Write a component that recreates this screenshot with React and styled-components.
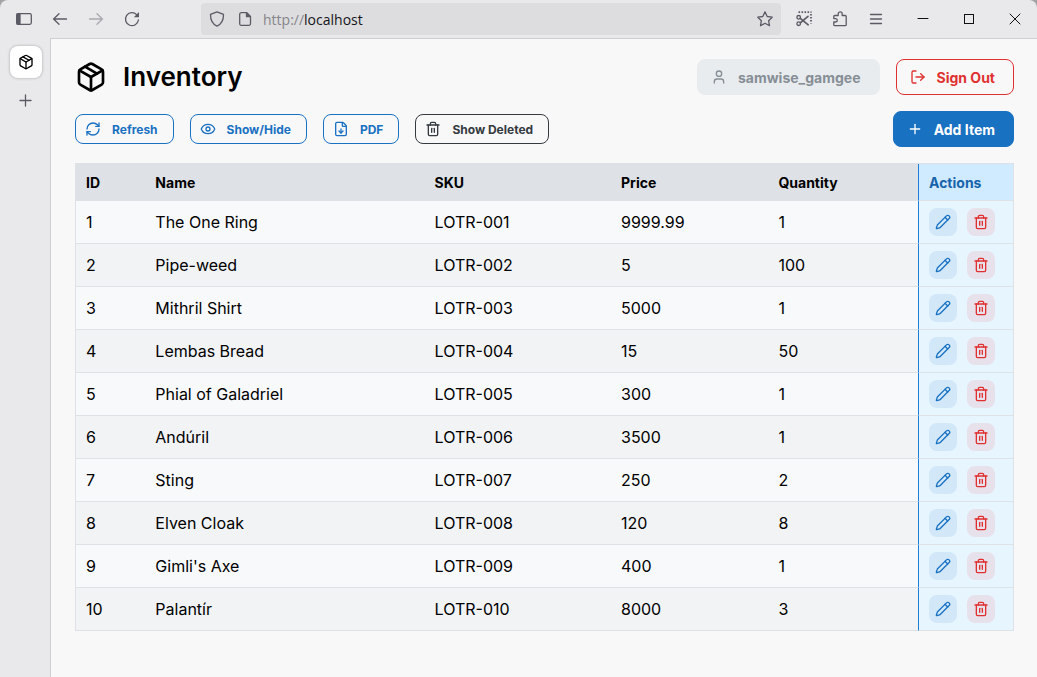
import React from "react";
import styled, { createGlobalStyle } from "styled-components";
import {
  Package, RefreshCw, Eye, FileDown, Trash2, User, LogOut, Plus, Pencil,
} from "lucide-react";

const GlobalStyle = createGlobalStyle`
  *, *::before, *::after { box-sizing: border-box; }
  body {
    margin: 0;
    background: #a3a3a6;
    color: #000;
    font-family: Inter, "Liberation Sans", sans-serif;
  }
  button, input { font-family: inherit; margin: 0; }
`;

const BrowserWindow = styled.div`
  display: flex;
  flex-direction: column;
  min-height: 100vh;
  background: #e9e9eb;
  border-radius: 8px 8px 0 0;
`;

const Toolbar = styled.header`
  display: flex;
  align-items: center;
  height: 38px;
  padding: 0 14px;
`;

const ToolGroup = styled.div`
  display: flex;
  align-items: center;
  gap: ${(p) => p.$gap}px;
`;

const ToolButton = styled.button`
  display: flex;
  flex: none;
  padding: 0;
  border: 0;
  background: none;
  color: ${(p) => p.$color || "#5b5b66"};
  opacity: ${(p) => (p.disabled ? 0.45 : 1)};
`;

const AddressBar = styled.div`
  display: flex;
  flex: 1;
  align-items: center;
  gap: 12px;
  height: 32px;
  margin: 0 15px 0 59px;
  padding: 0 8px;
  border-radius: 4px;
  background: #dddddf;
`;

const Address = styled.a`
  flex: 1;
  margin-left: -2px;
  color: #15141a;
  font: 14px "Open Sans", sans-serif;
  text-decoration: none;
`;

const Scheme = styled.span`
  color: #85858a;
`;

const WindowControls = styled.div`
  display: flex;
  gap: 30px;
  margin-left: 31px;
`;

const Body = styled.div`
  display: flex;
  flex: 1;
`;

const TabRail = styled.nav`
  display: flex;
  flex: none;
  flex-direction: column;
  align-items: center;
  gap: 15px;
  width: 50px;
  padding: 8px 0 0 2px;
`;

const Tab = styled.button`
  display: flex;
  align-items: center;
  justify-content: center;
  width: 32px;
  height: 32px;
  padding: 0;
  border: 0;
  border-radius: 8px;
  background: #fff;
  box-shadow: 0 0 3px rgba(0, 0, 0, 0.3);
`;

const Page = styled.main`
  flex: 1;
  min-width: 0;
  padding: 20px 23px 24px 24px;
  border: solid #cfcfd2;
  border-width: 1px 0 0 1px;
  background: #f8f8f8;
`;

const Bar = styled.div`
  display: flex;
  align-items: center;
  justify-content: space-between;
  height: 36px;
  margin-bottom: 16px;
`;

const Group = styled.div`
  display: flex;
  align-items: center;
  gap: 16px;
`;

const Title = styled.h1`
  margin: 0;
  font-size: 26px;
  font-weight: 600;
  line-height: 38px;
`;

const tones = {
  blue: ["#1971c2", "transparent", "#1971c2"],
  dark: ["#343a40", "transparent", "#343a40"],
  red: ["#e03131", "transparent", "#e03131"],
  filled: ["#fff", "#1971c2", "#1971c2"],
  muted: ["#868e96", "#e9ecef", "#e9ecef"],
};

const Button = styled.button`
  display: flex;
  align-items: center;
  gap: 11px;
  height: ${(p) => (p.$large ? 36 : 30)}px;
  padding: ${(p) => (p.$large ? "0 18px 0 13px" : "0 15px 0 9px")};
  border: 1px solid ${(p) => tones[p.$tone][2]};
  border-radius: 8px;
  background: ${(p) => tones[p.$tone][1]};
  color: ${(p) => tones[p.$tone][0]};
  font-size: ${(p) => (p.$large ? 14 : 12)}px;
  font-weight: 700;
  white-space: nowrap;
`;

const Table = styled.table`
  width: 100%;
  table-layout: fixed;
  border: solid #dee2e6;
  border-width: 1px 1px 0;
  border-spacing: 0;
`;

const Column = styled.col`
  width: ${(p) => p.$width};
`;

const HeadCell = styled.th`
  height: 37px;
  padding: 0 10px;
  border-bottom: 1px solid #dee2e6;
  background: #dee2e6;
  font-size: 14px;
  font-weight: 700;
  text-align: left;
`;

const ActionsHead = styled(HeadCell)`
  border-left: 1px solid #1c7ed6;
  background: #d0ebff;
  color: #1864ab;
`;

const Row = styled.tr`
  background: #f8f9fb;
  &:nth-child(even) { background: #f1f3f5; }
`;

const Cell = styled.td`
  height: 43px;
  padding: 0 10px;
  border-bottom: 1px solid #dee2e6;
  font-size: 16px;
`;

const ActionsCell = styled(Cell)`
  border-left: 1px solid #1c7ed6;
  background: #e7f5ff;
`;

const Actions = styled.div`
  display: flex;
  gap: 10px;
`;

const IconButton = styled.button`
  display: flex;
  align-items: center;
  justify-content: center;
  width: 28px;
  height: 28px;
  padding: 0;
  border: 0;
  border-radius: 8px;
  background: ${(p) => (p.$danger ? "#e7e1eb" : "#d2e8f9")};
  color: ${(p) => (p.$danger ? "#e03131" : "#1971c2")};
`;

function Glyph({ children, size = 16, width = 1.3 }) {
  return (
    <svg width={size} height={size} viewBox={`0 0 ${size} ${size}`} fill="none" stroke="currentColor"
      strokeWidth={width} strokeLinecap="round" strokeLinejoin="round" aria-hidden="true">
      {children}
    </svg>
  );
}

const items = [
  ["The One Ring", "LOTR-001", "9999.99", 1],
  ["Pipe-weed", "LOTR-002", "5", 100],
  ["Mithril Shirt", "LOTR-003", "5000", 1],
  ["Lembas Bread", "LOTR-004", "15", 50],
  ["Phial of Galadriel", "LOTR-005", "300", 1],
  ["Andúril", "LOTR-006", "3500", 1],
  ["Sting", "LOTR-007", "250", 2],
  ["Elven Cloak", "LOTR-008", "120", 8],
  ["Gimli's Axe", "LOTR-009", "400", 1],
  ["Palantír", "LOTR-010", "8000", 3],
];

function BrowserToolbar() {
  return (
    <Toolbar>
      <ToolGroup $gap={16}>
        <ToolButton aria-label="Sidebar">
          <Glyph size={20}>
            <rect x="2.7" y="4.7" width="14.6" height="10.6" rx="1.5" />
            <path d="M3 5h3v10H3z" fill="currentColor" />
          </Glyph>
        </ToolButton>
        <ToolButton aria-label="Back">
          <Glyph size={20}><path d="M16.5 10H3.5M9 4.8 3.6 10 9 15.2" /></Glyph>
        </ToolButton>
        <ToolButton aria-label="Forward" disabled>
          <Glyph size={20}><path d="M3.5 10h13M11 4.8l5.4 5.2-5.4 5.2" /></Glyph>
        </ToolButton>
        <ToolButton aria-label="Reload">
          <Glyph size={20}>
            <path d="M16.4 11A6.5 6.5 0 1 1 14.6 5.6" />
            <path d="M17 3v5.2h-5.2z" fill="currentColor" stroke="none" />
          </Glyph>
        </ToolButton>
      </ToolGroup>
      <AddressBar>
        <ToolButton aria-label="Tracking protection">
          <Glyph><path d="M8 .9 14.5 3.4C14.6 9 12.4 13 8 15.1 3.6 13 1.4 9 1.5 3.4z" /></Glyph>
        </ToolButton>
        <ToolButton aria-label="Site information">
          <Glyph>
            <path d="M4.2 1.7h5.6L13.5 5.4v7.4a1.5 1.5 0 0 1-1.5 1.5H4.2a1.5 1.5 0 0 1-1.5-1.5V3.2a1.5 1.5 0 0 1 1.5-1.5z" />
            <path d="M9.5 2v3.7h3.7z" fill="currentColor" />
          </Glyph>
        </ToolButton>
        <Address href="http://localhost"><Scheme>http://</Scheme>localhost</Address>
        <ToolButton aria-label="Bookmark">
          <Glyph><path d="m8 .9 2.2 4.6 5 .7-3.6 3.5.9 5L8 12.3l-4.5 2.4.9-5L.8 6.2l5-.7z" /></Glyph>
        </ToolButton>
      </AddressBar>
      <ToolGroup $gap={20}>
        <ToolButton aria-label="Screenshot">
          <Glyph>
            <path d="M2.5 1.2h13M15 3v9.5" strokeWidth="1.8" strokeDasharray="1.6 1.4" strokeLinecap="butt" />
            <circle cx="2.7" cy="6.3" r="1.8" />
            <circle cx="2.7" cy="12.7" r="1.8" />
            <path d="M4.3 7.3 12.2 13.8M4.3 11.8 12 5.3" strokeWidth="1.7" />
          </Glyph>
        </ToolButton>
        <ToolButton aria-label="Extensions">
          <Glyph>
            <path d="M6.2 4.5V2.8a2 2 0 0 1 4 0v1.7h3a1 1 0 0 1 1 1v8.2a1 1 0 0 1-1 1H2.8a1 1 0 0 1-1-1V11h1.8a1.7 1.7 0 0 0 0-3.4H1.8V5.5a1 1 0 0 1 1-1z" />
          </Glyph>
        </ToolButton>
        <ToolButton aria-label="Menu">
          <Glyph><path d="M2.5 3.5h11M2.5 8h11M2.5 12.5h11" /></Glyph>
        </ToolButton>
      </ToolGroup>
      <WindowControls>
        <ToolButton aria-label="Minimize" $color="#111">
          <Glyph width={1}><path d="M3 7.5h10" /></Glyph>
        </ToolButton>
        <ToolButton aria-label="Maximize" $color="#111">
          <Glyph width={1}><rect x="3.5" y="3.5" width="9" height="9" strokeLinejoin="miter" /></Glyph>
        </ToolButton>
        <ToolButton aria-label="Close" $color="#111">
          <Glyph width={1}><path d="m3 3 10 10M13 3 3 13" /></Glyph>
        </ToolButton>
      </WindowControls>
    </Toolbar>
  );
}

export default function App() {
  return (
    <>
      <GlobalStyle />
      <BrowserWindow>
        <BrowserToolbar />
        <Body>
          <TabRail>
            <Tab aria-label="Inventory tab"><Package size={16} /></Tab>
            <ToolButton aria-label="New tab">
              <Glyph><path d="M7.5 2v11M2 7.5h11" /></Glyph>
            </ToolButton>
          </TabRail>
          <Page>
            <Bar>
              <Group>
                <Package size={32} />
                <Title>Inventory</Title>
              </Group>
              <Group>
                <Button $large $tone="muted" disabled><User size={16} />samwise_gamgee</Button>
                <Button $large $tone="red"><LogOut size={16} />Sign Out</Button>
              </Group>
            </Bar>
            <Bar>
              <Group>
                <Button $tone="blue"><RefreshCw size={16} />Refresh</Button>
                <Button $tone="blue"><Eye size={16} />Show/Hide</Button>
                <Button $tone="blue"><FileDown size={16} />PDF</Button>
                <Button $tone="dark"><Trash2 size={16} />Show Deleted</Button>
              </Group>
              <Button $large $tone="filled"><Plus size={16} />Add Item</Button>
            </Bar>
            <Table>
              <colgroup>
                <Column $width="7.4%" />
                <Column $width="29.8%" />
                <Column $width="19.9%" />
                <Column $width="16.8%" />
                <Column />
                <Column $width="95px" />
              </colgroup>
              <thead>
                <tr>
                  <HeadCell>ID</HeadCell>
                  <HeadCell>Name</HeadCell>
                  <HeadCell>SKU</HeadCell>
                  <HeadCell>Price</HeadCell>
                  <HeadCell>Quantity</HeadCell>
                  <ActionsHead>Actions</ActionsHead>
                </tr>
              </thead>
              <tbody>
                {items.map(([name, sku, price, quantity], i) => (
                  <Row key={sku}>
                    <Cell>{i + 1}</Cell>
                    <Cell>{name}</Cell>
                    <Cell>{sku}</Cell>
                    <Cell>{price}</Cell>
                    <Cell>{quantity}</Cell>
                    <ActionsCell>
                      <Actions>
                        <IconButton aria-label={`Edit ${name}`}><Pencil size={16} /></IconButton>
                        <IconButton $danger aria-label={`Delete ${name}`}><Trash2 size={16} /></IconButton>
                      </Actions>
                    </ActionsCell>
                  </Row>
                ))}
              </tbody>
            </Table>
          </Page>
        </Body>
      </BrowserWindow>
    </>
  );
}
